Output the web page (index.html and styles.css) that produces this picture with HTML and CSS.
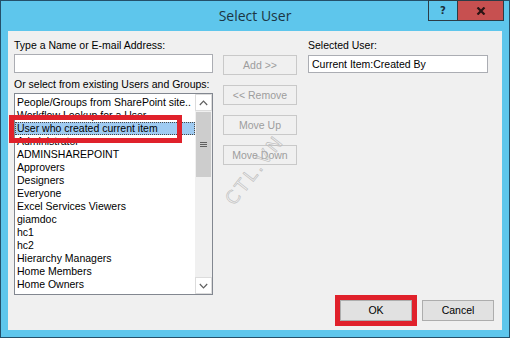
FILE: index.html
```html
<!DOCTYPE html>
<html>
<head>
<meta charset="utf-8">
<link rel="stylesheet" href="styles.css">
</head>
<body>
<div class="window">
  <div class="titlebar">
    <div class="title">Select User</div>
    <div class="caption-btns">
      <div class="cbtn help">?</div>
      <div class="cbtn close">
        <svg width="10" height="8" viewBox="0 0 10 8"><path d="M1.5 0.5 L8.5 7.5 M8.5 0.5 L1.5 7.5" stroke="#2a1414" stroke-width="2.2" fill="none"/></svg>
      </div>
    </div>
  </div>
  <div class="client">
    <div class="main">
      <div class="col-left">
        <div class="label">Type a Name or E-mail Address:</div>
        <div class="textbox name-box"></div>
        <div class="label label-gap">Or select from existing Users and Groups:</div>
        <div class="listbox">
          <div class="items">
            <div class="item">People/Groups from SharePoint site..</div>
            <div class="item">Workflow Lookup for a User</div>
            <div class="item selected">User who created current item</div>
            <div class="item">Administrator</div>
            <div class="item">ADMINSHAREPOINT</div>
            <div class="item">Approvers</div>
            <div class="item">Designers</div>
            <div class="item">Everyone</div>
            <div class="item">Excel Services Viewers</div>
            <div class="item">giamdoc</div>
            <div class="item">hc1</div>
            <div class="item">hc2</div>
            <div class="item">Hierarchy Managers</div>
            <div class="item">Home Members</div>
            <div class="item">Home Owners</div>
          </div>
          <div class="scrollbar">
            <div class="sb-btn">
              <svg width="9" height="6" viewBox="0 0 9 6"><path d="M0.8 5 L4.5 1.2 L8.2 5" stroke="#606060" stroke-width="1.2" fill="none"/></svg>
            </div>
            <div class="sb-track">
              <div class="sb-thumb">
                <svg width="7" height="7" viewBox="0 0 7 7"><path d="M0 1.5 H7 M0 3.5 H7 M0 5.5 H7" stroke="#606060" stroke-width="1" fill="none"/></svg>
              </div>
            </div>
            <div class="sb-btn">
              <svg width="9" height="6" viewBox="0 0 9 6"><path d="M0.8 1 L4.5 4.8 L8.2 1" stroke="#606060" stroke-width="1.2" fill="none"/></svg>
            </div>
          </div>
        </div>
      </div>
      <div class="col-mid">
        <div class="btn disabled">Add &gt;&gt;</div>
        <div class="btn disabled">&lt;&lt; Remove</div>
        <div class="btn disabled">Move Up</div>
        <div class="btn disabled">Move Down</div>
      </div>
      <div class="col-right">
        <div class="label">Selected User:</div>
        <div class="textbox sel-box">Current Item:Created By</div>
      </div>
    </div>
    <div class="footer">
      <div class="btn dlg ok">OK</div>
      <div class="btn dlg">Cancel</div>
    </div>
    <div class="mark-box"></div>
    <span class="watermark">CTL.VN</span>
  </div>
</div>
</body>
</html>
```
FILE: styles.css
```css
* { box-sizing: border-box; }
html, body { margin: 0; padding: 0; }
body {
  width: 510px;
  height: 338px;
  overflow: hidden;
  font-family: "Liberation Sans", Arial, sans-serif;
  font-size: 10.5px;
  color: #000;
}
.window {
  width: 510px;
  height: 338px;
  border: 1px solid #24506a;
  background: #5ec6ec;
  display: flex;
  flex-direction: column;
}
.titlebar {
  height: 30px;
  position: relative;
  flex: none;
}
.title {
  text-align: center;
  font-family: "Open Sans", "Noto Sans", sans-serif;
  font-size: 14px;
  line-height: 29px;
  color: #1c3544;
}
.caption-btns {
  position: absolute;
  top: -1px;
  right: 5px;
  display: flex;
}
.cbtn {
  height: 21px;
  border: 1px solid #2b3c46;
  display: flex;
  align-items: center;
  justify-content: center;
}
.help {
  width: 29px;
  font-family: "DejaVu Sans", sans-serif;
  font-weight: bold;
  font-size: 10px;
  color: #1b2d38;
  border-right: none;
}
.close {
  width: 47px;
  background: #c75050;
}
.client {
  flex: 1;
  margin: 0 7px 7px 7px;
  background: #f0f0f0;
  position: relative;
  display: flex;
  flex-direction: column;
}
.main {
  display: flex;
}
.label {
  line-height: 14px;
  white-space: nowrap;
}
.col-left {
  margin-left: 6px;
  width: 199px;
  padding-top: 7px;
  display: flex;
  flex-direction: column;
}
.textbox {
  background: #fff;
  border: 1px solid #abadb3;
  line-height: 16px;
  padding-left: 3px;
  white-space: nowrap;
}
.name-box {
  height: 19px;
  margin-top: 2px;
}
.label-gap { margin-top: 4px; }
.listbox {
  margin-top: 2px;
  height: 202px;
  background: #fff;
  border: 1px solid #828790;
  display: flex;
}
.items {
  flex: 1;
  padding-top: 2px;
  overflow: hidden;
}
.item {
  line-height: 13px;
  height: 13px;
  padding-left: 2px;
  white-space: nowrap;
}
.item.selected {
  background: #9fcbf2;
  outline: 1px dotted #4a4a4a;
  outline-offset: -1px;
}
.scrollbar {
  width: 17px;
  display: flex;
  flex-direction: column;
  background: #f0f0f0;
}
.sb-btn {
  height: 17px;
  background: #fff;
  border: 1px solid #dcdcdc;
  display: flex;
  align-items: center;
  justify-content: center;
}
.sb-track {
  flex: 1;
  padding-top: 1px;
}
.sb-thumb {
  height: 65px;
  margin: 0 1px;
  background: #cdcdcd;
  display: flex;
  align-items: center;
  justify-content: center;
}
.col-mid {
  margin-left: 10px;
  width: 74px;
  padding-top: 24px;
  display: flex;
  flex-direction: column;
  gap: 10px;
}
.btn {
  height: 20px;
  line-height: 18px;
  text-align: center;
  white-space: nowrap;
  border: 1px solid #adadad;
  background: #e1e1e1;
}
.btn.disabled {
  color: #9d9d9d;
  border-color: #c9c9c9;
  background: #f0f0f0;
}
.col-right {
  margin-left: 11px;
  width: 180px;
  padding-top: 7px;
  display: flex;
  flex-direction: column;
}
.sel-box {
  height: 18px;
  margin-top: 3px;
  line-height: 16px;
}
.footer {
  margin-top: 5px;
  display: flex;
  justify-content: flex-end;
  gap: 10px;
  padding-right: 8px;
}
.btn.dlg {
  width: 72px;
  height: 21px;
  line-height: 19px;
}
.btn.ok {
  outline: 5px solid #e0212b;
}
.mark-box {
  position: absolute;
  left: 1px;
  top: 84px;
  width: 173px;
  height: 28px;
  border: 5px solid #e0212b;
}
.watermark {
  position: absolute;
  left: 205px;
  top: 128px;
  font-family: "DejaVu Sans", sans-serif;
  font-size: 18px;
  letter-spacing: 3px;
  color: transparent;
  -webkit-text-stroke: 0.6px #bcbcbc;
  transform: rotate(-52deg);
  white-space: nowrap;
}
```
